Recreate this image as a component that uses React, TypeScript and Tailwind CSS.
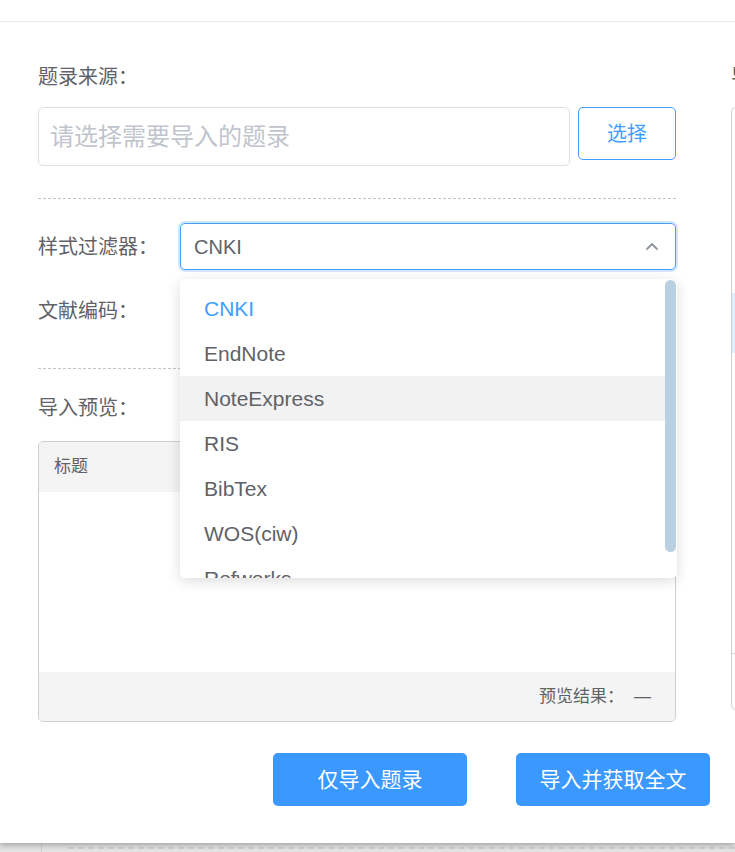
import React from "react";

const options = ["CNKI", "EndNote", "NoteExpress", "RIS", "BibTex", "WOS(ciw)", "Refworks"];

const font = "font-['Liberation_Sans','Noto_Sans_CJK_SC',sans-serif]";

const Label: React.FC<{ text: string }> = ({ text }) => (
  <div className="w-[142px] shrink-0 text-[20px] leading-[26px] text-[#5f6268]">{text}</div>
);

const App: React.FC = () => {
  return (
    <div className={`relative h-[852px] w-[735px] overflow-hidden bg-[#e4e4e4] ${font}`}>
      <div className="relative z-10 flex h-[843px] flex-col bg-white shadow-[0_2px_6px_rgba(0,0,0,0.3)]">
        <div className="h-[22px] shrink-0 border-b border-[#ebebeb]" />

        <div className="flex gap-[55px] pl-[38px]">
          {/* left column */}
          <div className="w-[638px] shrink-0">
            <div className="mt-[42px] text-[20px] leading-[26px] text-[#5f6268]">题录来源：</div>

            <div className="mt-[17px] flex items-start gap-[8px]">
              <div className="flex h-[59px] flex-1 items-center rounded-[5px] border border-[#dcdfe6] px-[11px] text-[24px] text-[#c0c4cc]">
                请选择需要导入的题录
              </div>
              <button className="h-[53px] w-[98px] rounded-[5px] border border-[#409eff] bg-white text-[20px] text-[#409eff]">
                选择
              </button>
            </div>

            <div className="mt-[32px] border-t border-dashed border-[#c4c4c4]" />

            <div className="relative mt-[24px] flex items-center">
              <Label text="样式过滤器：" />
              <div className="flex h-[47px] flex-1 items-center justify-between rounded-[5px] border border-[#409eff] pl-[13px] pr-[16px] text-[20px] text-[#5f6268] ring-2 ring-[#d3e6fb]">
                <span>CNKI</span>
                <svg width="14" height="9" viewBox="0 0 14 9" fill="none">
                  <path d="M1.5 7.5 7 2l5.5 5.5" stroke="#8e9299" strokeWidth="1.8" />
                </svg>
              </div>

              {/* dropdown */}
              <div className="absolute left-[142px] top-[56px] z-20 h-[299px] w-[497px] overflow-hidden rounded-[5px] bg-white shadow-[0_3px_14px_rgba(0,0,0,0.14)]">
                <div className="pt-[7px] pr-[12px]">
                  {options.map((o, i) => (
                    <div
                      key={o}
                      className={
                        "flex h-[45px] items-center pl-[24px] text-[21px] " +
                        (i === 0 ? "text-[#409eff] " : "text-[#5f6268] ") +
                        (i === 2 ? "bg-[#f2f2f2]" : "")
                      }
                    >
                      {o}
                    </div>
                  ))}
                </div>
                <div className="absolute right-[1px] top-[1px] h-[272px] w-[11px] rounded-full bg-[#b9cfe2]" />
              </div>
            </div>

            <div className="mt-[17px] flex h-[47px] items-center">
              <Label text="文献编码：" />
            </div>

            <div className="mt-[34px] border-t border-dashed border-[#c4c4c4]" />

            <div className="mt-[26px] text-[20px] leading-[26px] text-[#5f6268]">导入预览：</div>

            <div className="mt-[20px] flex h-[281px] flex-col overflow-hidden rounded-[5px] border border-[#cfcfcf]">
              <div className="flex h-[50px] items-center bg-[#f4f4f4] pl-[15px] text-[17px] text-[#5f6268]">标题</div>
              <div className="flex-1" />
              <div className="flex h-[49px] items-center justify-end bg-[#f4f4f4] pr-[24px] text-[17px] text-[#5f6268]">
                预览结果：<span className="ml-[10px]">—</span>
              </div>
            </div>
          </div>

          {/* right column, cut off by the viewport */}
          <div className="w-[300px] shrink-0">
            <div className="mt-[42px] text-[20px] leading-[26px] text-[#5f6268]">导入结果：</div>
            <div className="mt-[17px] flex h-[603px] flex-col rounded-[5px] border border-[#cfcfcf]">
              <div className="h-[185px]" />
              <div className="h-[60px] bg-[#dceeff]" />
              <div className="flex-1 border-b border-[#d8d8d8]" />
              <div className="h-[55px]" />
            </div>
          </div>
        </div>

        <div className="mt-[31px] flex gap-[49px] pl-[273px]">
          <button className="h-[53px] w-[194px] rounded-[5px] bg-[#3a98ff] text-[21px] text-white">仅导入题录</button>
          <button className="h-[53px] w-[194px] rounded-[5px] bg-[#3a98ff] text-[21px] text-white">导入并获取全文</button>
        </div>
      </div>

      <div className="absolute bottom-[3px] left-[68px] right-0 border-t-2 border-dashed border-[#d2d2d2]" />
      <div className="absolute bottom-0 left-[41px] top-[843px] border-l border-[#d0d0d0]" />
    </div>
  );
};

export default App;
